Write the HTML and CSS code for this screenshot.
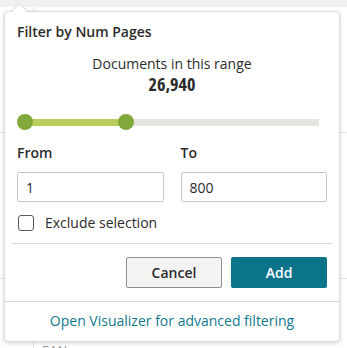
FILE: index.html
```html
<!DOCTYPE html>
<html>
<head>
    <title>Filter by Num Pages</title>
    <meta charset="utf-8"/>
    <link rel="stylesheet" href="styles.css">
</head>
<body>
<div class="page">
    <div class="topbar"></div>
    <div class="row row-first">
        <div class="gutter"></div>
        <div class="cell"></div>
    </div>
    <div class="row row-second">
        <div class="gutter"></div>
        <div class="cell"></div>
    </div>
    <div class="row row-third">
        <div class="gutter"></div>
        <div class="cell cell-text">EAN</div>
    </div>
</div>

<div class="popover">
    <div class="popover-body">
        <h2 class="popover-title">Filter by Num Pages</h2>
        <p class="count-label">Documents in this range</p>
        <p class="count-value">26,940</p>

        <div class="slider">
            <div class="slider-track">
                <div class="slider-fill" style="width: 101px;"></div>
            </div>
            <span class="knob knob-min" style="left: 0px;"></span>
            <span class="knob knob-max" style="left: 101px;"></span>
        </div>

        <div class="range-fields">
            <div class="field">
                <label for="input_from">From</label>
                <input type="text" id="input_from" value="1">
            </div>
            <div class="field">
                <label for="input_to">To</label>
                <input type="text" id="input_to" value="800">
            </div>
        </div>

        <label class="exclude">
            <span class="checkbox"></span>
            Exclude selection
        </label>

        <div class="divider"></div>

        <div class="actions">
            <button class="btn btn-cancel">Cancel</button>
            <button class="btn btn-add">Add</button>
        </div>
    </div>
    <div class="popover-footer">
        <a href="#" class="visualizer-link">Open Visualizer for advanced filtering</a>
    </div>
</div>
</body>
</html>
```

FILE: styles.css
```css
body {
    font-family: "Open Sans", Arial, sans-serif;
    background-color: #fff;
    margin: 0;
    color: #2b2b2b;
    font-size: 14px;
}

/* page behind the popover */
.page {
    height: 348px;
    overflow: hidden;
}

.topbar {
    height: 7px;
    background-color: #f2f1ef;
}

.row {
    display: flex;
    border-bottom: 1px solid #e2e2e2;
}

.row-first {
    height: 125px;
}

.row-second {
    height: 145px;
}

.row-third {
    height: 80px;
    border-bottom: none;
}

.gutter {
    width: 33px;
    border-right: 1px solid #e2e2e2;
}

.cell {
    flex: 1;
}

.cell-text {
    padding: 62px 0 0 8px;
    color: #999;
    font-size: 13px;
}

/* popover */
.popover {
    position: absolute;
    left: 4px;
    top: 11px;
    width: 334px;
    background-color: #fff;
    border: 1px solid #dcdcdc;
    border-radius: 4px;
    box-shadow: 0 1px 4px rgba(0, 0, 0, 0.18);
}

.popover::before {
    content: "";
    position: absolute;
    left: 9px;
    top: -7px;
    width: 10px;
    height: 10px;
    background-color: #fff;
    border-left: 1px solid #dcdcdc;
    border-top: 1px solid #dcdcdc;
    transform: rotate(45deg);
}

.popover-body {
    padding: 10px 12px 13px 12px;
}

.popover-title {
    font-size: 14px;
    font-weight: 600;
    margin: 0;
    line-height: 19px;
}

.count-label {
    text-align: center;
    margin: 13px 0 0 0;
    line-height: 19px;
}

.count-value {
    text-align: center;
    margin: 0;
    font-size: 18px;
    font-weight: 700;
    font-stretch: condensed;
    line-height: 23px;
}

.slider {
    position: relative;
    margin: 18px 8px 0 8px;
    height: 16px;
}

.slider-track {
    position: absolute;
    left: 0;
    right: 0;
    top: 5px;
    height: 7px;
    background-color: #e4e3e0;
}

.slider-fill {
    height: 100%;
    background-color: #b9cd5c;
}

.knob {
    position: absolute;
    top: 0;
    width: 16px;
    height: 16px;
    margin-left: -8px;
    border-radius: 50%;
    background-color: #80a83a;
}

.range-fields {
    display: flex;
    gap: 17px;
    margin-top: 13px;
}

.field {
    flex: 1;
}

.field label {
    display: block;
    font-weight: 600;
    line-height: 19px;
    margin-bottom: 10px;
}

.field input {
    box-sizing: border-box;
    width: 100%;
    height: 30px;
    padding: 0 8px;
    border: 1px solid #c9c9c9;
    border-radius: 2px;
    font-family: inherit;
    font-size: 14px;
    color: #2b2b2b;
}

.exclude {
    display: flex;
    align-items: center;
    gap: 11px;
    margin-top: 11px;
    padding-left: 1px;
    line-height: 19px;
}

.checkbox {
    width: 14px;
    height: 14px;
    border: 1px solid #595959;
    border-radius: 3px;
}

.divider {
    height: 1px;
    background-color: #d9d9d9;
    margin: 11px -5px 0 -5px;
}

.actions {
    display: flex;
    justify-content: flex-end;
    gap: 9px;
    margin-top: 13px;
}

.btn {
    width: 96px;
    height: 31px;
    border-radius: 2px;
    font-family: inherit;
    font-size: 14px;
    font-weight: 600;
    cursor: pointer;
}

.btn-cancel {
    background-color: #f4f3f1;
    border: 1px solid #8e8e8e;
    color: #2b2b2b;
}

.btn-add {
    background-color: #0b7489;
    border: none;
    color: #fff;
}

.btn-add:hover {
    background-color: #09657a;
}

.popover-footer {
    border-top: 1px solid #d9d9d9;
    text-align: center;
    padding: 9px 0 11px 0;
    line-height: 19px;
}

.visualizer-link {
    color: #127a8f;
    text-decoration: none;
}
```
